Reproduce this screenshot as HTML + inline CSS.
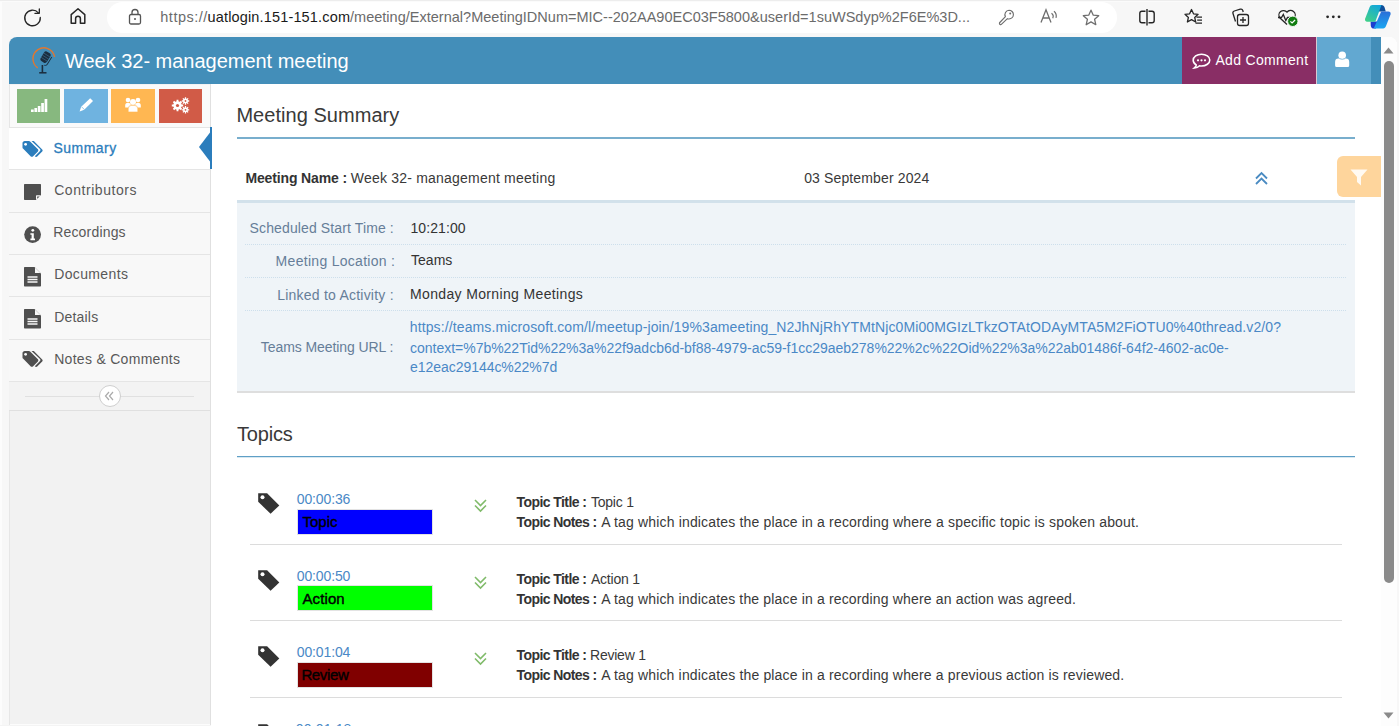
<!DOCTYPE html>
<html><head><meta charset="utf-8">
<style>
*{box-sizing:border-box;margin:0;padding:0}
html,body{width:1399px;height:726px;overflow:hidden;background:#f7f7f7;font-family:"Liberation Sans",sans-serif;}
.a{position:absolute;white-space:nowrap}
svg{position:absolute;overflow:visible}
#page{position:absolute;left:9px;top:37px;width:1388px;height:689px;background:#fff;border-radius:8px 8px 0 0;overflow:hidden}
#hdr{position:absolute;left:0;top:0;width:1372px;height:47px;background:#438eb9}
#sb{position:absolute;left:0;top:47px;width:202px;height:642px;background:#f2f2f2;border-right:1px solid #e0e0e0}
.nav{position:absolute;left:0;width:201px;height:42px;border-top:1px solid #e5e5e5;background:#f9f9f9}
.nav span{position:absolute;left:45px;top:12px;font-size:14px;color:#585858}
#scroll{position:absolute;left:1372px;top:0;width:16px;height:689px;background:#fafafa}

.nt{font-size:14px;color:#585858}
.h2{font-size:20px;color:#393939}
.t13{font-size:14px;color:#393939}
.t13 b{color:#333}
.lbl{font-size:14px;color:#667e99}
.val{font-size:14px;color:#333}
.lnk{color:#4a88c6}
.dot{width:1102px;height:1px;background-image:linear-gradient(to right,#cddfec 50%,transparent 50%);background-size:2px 1px}
.tm{font-size:14px;color:#4a88c6}
.lab{font-size:15px;color:#000}
</style></head><body>
<!-- browser toolbar -->
<div class="a" style="left:0;top:0;width:1399px;height:1px;background:#ededed"></div><div class="a" style="left:0;top:1px;width:1399px;height:1px;background:#fbfbfb"></div>
<!-- reload -->
<svg style="left:21.5px;top:6.5px" width="21" height="21" viewBox="0 0 20 20"><path d="M16.5 1.8V6H12.3" fill="none" stroke="#262626" stroke-width="1.25" stroke-linecap="round" stroke-linejoin="round"/><path d="M15.6 5.6A7.4 7.4 0 1 0 17.4 10" fill="none" stroke="#262626" stroke-width="1.25" stroke-linecap="round"/></svg>
<!-- home -->
<svg style="left:69px;top:7px" width="18" height="18" viewBox="0 0 18 18"><path d="M2.2 16.2V7.6L9 1.8l6.8 5.8v8.6h-4.4v-4.6a2.4 2.4 0 0 0-4.8 0v4.6z" fill="none" stroke="#262626" stroke-width="1.5" stroke-linejoin="round"/></svg>
<div class="a" style="left:107px;top:2px;width:1010px;height:31px;background:#fff;border-radius:16px"></div>
<!-- lock -->
<svg style="left:128px;top:8px" width="14" height="17" viewBox="0 0 14 17"><rect x="1.5" y="6.5" width="11" height="9.5" rx="1.5" fill="none" stroke="#555" stroke-width="1.3"/><path d="M4 6.5V4.5a3 3 0 0 1 6 0v2" fill="none" stroke="#555" stroke-width="1.3"/><circle cx="7" cy="11" r="1" fill="#555"/></svg>
<!-- key -->
<svg style="left:998px;top:9px" width="17" height="16" viewBox="0 0 17 16"><path d="M11 1.2a4.4 4.4 0 0 1 0 8.8c-.6 0-1.1-.1-1.6-.3L3.6 15.2a1.2 1.2 0 0 1-1.8-1.7L7.4 7.6A4.4 4.4 0 0 1 11 1.2z" fill="none" stroke="#6e6e6e" stroke-width="1.15" stroke-linejoin="round"/><circle cx="12.2" cy="4.6" r="1" fill="#6e6e6e"/></svg>
<!-- read aloud -->
<svg style="left:1040px;top:8px" width="18" height="16" viewBox="0 0 18 16"><path d="M1 14.5L6 1.8l5 12.7M2.8 10h6.4" fill="none" stroke="#6e6e6e" stroke-width="1.3"/><path d="M11.5 5.2a4 4 0 0 1 1.2 5M14 3.2a6.5 6.5 0 0 1 2 6.6" fill="none" stroke="#6e6e6e" stroke-width="1.2"/></svg>
<!-- star -->
<svg style="left:1082px;top:9px" width="18" height="17" viewBox="0 0 18 17"><path d="M9 1.2l2.3 5 5.4.5-4.1 3.6 1.2 5.4L9 12.9l-4.8 2.8 1.2-5.4L1.3 6.7l5.4-.5z" fill="none" stroke="#6e6e6e" stroke-width="1.3" stroke-linejoin="round"/></svg>
<!-- split -->
<svg style="left:1138px;top:8px" width="18" height="18" viewBox="0 0 18 18"><path d="M7.5 3.2H4a2.2 2.2 0 0 0-2.2 2.2v7.2A2.2 2.2 0 0 0 4 14.8h3.5M10.5 3.2H14a2.2 2.2 0 0 1 2.2 2.2v7.2a2.2 2.2 0 0 1-2.2 2.2h-3.5M9 1v16.5" fill="none" stroke="#262626" stroke-width="1.4"/></svg>
<!-- favorites -->
<svg style="left:1184px;top:8px" width="19" height="18" viewBox="0 0 19 18"><path d="M7.5 1.5l2 4.3 4.6.5-3.4 3.1 1 4.6-4.2-2.4-4.1 2.4 1-4.6L1 6.3l4.6-.5z" fill="none" stroke="#262626" stroke-width="1.3" stroke-linejoin="round"/><path d="M12.5 9.2h5.5M13.2 12.2h4.8M11.5 15.2h6.5" stroke="#262626" stroke-width="1.3"/></svg>
<!-- collections -->
<svg style="left:1231px;top:8px" width="19" height="18" viewBox="0 0 19 18"><path d="M4.5 13.5L2 5.5a2 2 0 0 1 1.3-2.5l6-1.8a2 2 0 0 1 2.5 1.3l.4 1.5" fill="none" stroke="#262626" stroke-width="1.3"/><rect x="6.5" y="6.5" width="11" height="11" rx="2.2" fill="#f7f7f7" stroke="#262626" stroke-width="1.3"/><path d="M12 9v6M9 12h6" stroke="#262626" stroke-width="1.3"/></svg>
<!-- health -->
<svg style="left:1277px;top:9px" width="22" height="18" viewBox="0 0 22 18"><path d="M10 15.5L3 9a4.5 4.5 0 0 1 7-5.8A4.5 4.5 0 0 1 17.2 9" fill="none" stroke="#262626" stroke-width="1.3"/><path d="M1 8.5h3.5l1.8-3 2.5 6 1.7-3H13" fill="none" stroke="#262626" stroke-width="1.3"/><circle cx="15.8" cy="12.3" r="5.2" fill="#107c10" stroke="#f7f7f7" stroke-width="1"/><path d="M13.4 12.4l1.7 1.6 3-3" fill="none" stroke="#fff" stroke-width="1.2"/></svg>
<!-- more -->
<svg style="left:1326px;top:15px" width="15" height="4" viewBox="0 0 15 4"><circle cx="1.6" cy="1.8" r="1.4" fill="#262626"/><circle cx="7.3" cy="1.8" r="1.4" fill="#262626"/><circle cx="13" cy="1.8" r="1.4" fill="#262626"/></svg>
<!-- copilot -->
<svg style="left:1360px;top:0px" width="39" height="35" viewBox="0 0 39 35">
<defs>
<linearGradient id="cg1" x1="0.8" y1="0" x2="0.2" y2="1"><stop offset="0" stop-color="#12a6dc"/><stop offset="1" stop-color="#3fd08a"/></linearGradient>
<linearGradient id="cg2" x1="0.5" y1="0" x2="0.5" y2="1"><stop offset="0" stop-color="#2b6fd8"/><stop offset="1" stop-color="#1aa6f2"/></linearGradient>
</defs>
<path d="M18 5h3.5c1.6 0 2.6 1 3.1 2.6l1.2 4H19z" fill="#0f4f9a"/>
<path d="M10.6 21.5h6.6l-1.2 7h-2.2c-1.6 0-2.6-1-3-2.6z" fill="#1a3fd0"/>
<path d="M12.5 5h9l-6.2 16.7H7.2c-1.7 0-2.6-1.3-2.1-2.9L9.6 7.3C10.2 5.8 11 5 12.5 5z" fill="url(#cg1)"/>
<path d="M21.2 11.6h7.2c1.7 0 2.6 1.3 2.1 2.9L26 26.1c-.6 1.5-1.4 2.3-2.9 2.3h-9.4z" fill="url(#cg2)"/>
</svg>


<!-- page frame -->
<div class="a" style="left:9px;top:37px;width:1388px;height:689px;background:#fff;border-radius:8px 8px 0 0"></div>
<!-- header -->
<div class="a" style="left:9px;top:37px;width:1372px;height:47px;background:#438eb9;border-radius:8px 0 0 0"></div>
<svg style="left:28px;top:42px" width="32" height="36" viewBox="0 0 32 36">
 <path d="M26.6 15A10.9 10.9 0 1 0 9.7 25.8" fill="none" stroke="#e2772f" stroke-width="1.4"/>
 <g transform="rotate(32 17 16)"><rect x="13.3" y="9.5" width="7.4" height="11" rx="2.6" fill="#1b2d3e"/><path d="M13.3 12.5h7.4M13.3 15h7.4M13.3 17.5h7.4" stroke="#3d6e8f" stroke-width="0.6"/><path d="M22.2 11.5v8.5q0 2-2 2.5" fill="none" stroke="#1b2d3e" stroke-width="0.9"/></g>
 <path d="M14.4 23v8" stroke="#1b2d3e" stroke-width="1.6"/><path d="M11.2 30.8h7.3" stroke="#1b2d3e" stroke-width="1.5"/>
</svg>
<div class="a" style="left:1182px;top:37px;width:134px;height:47px;background:#892e65"></div>
<svg style="left:1192px;top:53px" width="19" height="16" viewBox="0 0 19 16"><path d="M9.5 1.2C4.9 1.2 1.2 3.9 1.2 7.3c0 1.9 1.2 3.6 3 4.7-.2 1.2-.9 2.3-1.8 3 2.2-.1 4-1 5.2-2.2.6.1 1.2.2 1.9.2 4.6 0 8.3-2.7 8.3-6S14.1 1.2 9.5 1.2z" fill="none" stroke="#fff" stroke-width="1.6"/><circle cx="6" cy="7.3" r="1.1" fill="#fff"/><circle cx="9.5" cy="7.3" r="1.1" fill="#fff"/><circle cx="13" cy="7.3" r="1.1" fill="#fff"/></svg>
<div class="a" style="left:1316px;top:37px;width:1px;height:47px;background:#d9c8d2"></div>
<div class="a" style="left:1317px;top:37px;width:54px;height:47px;background:#62a8d1"></div>
<svg style="left:1335px;top:51px" width="15" height="17" viewBox="0 0 15 17"><circle cx="7.2" cy="4.3" r="3.8" fill="#fff"/><path d="M0.1 14.4V11a3.4 3.4 0 0 1 3.4-3.4h7.3a3.4 3.4 0 0 1 3.4 3.4v3.4a1.5 1.5 0 0 1-1.5 1.5H1.6a1.5 1.5 0 0 1-1.5-1.5z" fill="#fff"/><path d="M4.5 7.7q2.7 1.2 5.4 0" stroke="#62a8d1" stroke-width="0.7" fill="none"/></svg>
<!-- scrollbar -->
<div class="a" style="left:1381px;top:37px;width:16px;height:689px;background:#fdfdfd;border-radius:0 8px 0 0"></div>
<svg style="left:1383px;top:47px" width="11" height="7" viewBox="0 0 11 7"><path d="M0.5 6.5L5.5 0.5l5 6z" fill="#8a8a8a"/></svg>
<div class="a" style="left:1384px;top:61px;width:10px;height:522px;background:#8a8a8a;border-radius:5px"></div>
<svg style="left:1383px;top:712px" width="11" height="7" viewBox="0 0 11 7"><path d="M0.5 0.5h10L5.5 6.5z" fill="#8a8a8a"/></svg>

<!-- sidebar -->
<div class="a" style="left:0;top:2px;width:2px;height:724px;background:#fcfcfc"></div>

<div class="a" style="left:9px;top:84px;width:202px;height:642px;background:#f2f2f2;border-right:1px solid #e0e0e0"></div>
<div class="a" style="left:9px;top:85px;width:201px;height:42px;background:#fafafa"></div>
<div class="a" style="left:9px;top:84px;width:1px;height:642px;background:#e6e6e6"></div>
<div class="a" style="left:17px;top:89px;width:43px;height:34px;background:#87b87f"></div>
<div class="a" style="left:64px;top:89px;width:44px;height:34px;background:#6fb3e0"></div>
<div class="a" style="left:111px;top:89px;width:44px;height:34px;background:#ffb752"></div>
<div class="a" style="left:159px;top:89px;width:43px;height:34px;background:#d15b47"></div>
<svg style="left:30px;top:98px" width="18" height="15" viewBox="0 0 18 15"><path d="M1 11.5h2.7V14H1zM4.4 10h2.7v4H4.4zM7.8 8h2.7v6H7.8zM11.2 5h2.7v9h-2.7zM14.6 1h2.7v13h-2.7z" fill="#fff"/></svg>
<svg style="left:78px;top:97px" width="16" height="16" viewBox="0 0 16 16"><path d="M12.2 1.2l2.8 2.8-8.8 8.8-4.6 1.6 1.6-4.6z" fill="#fff"/><path d="M3.6 9.8l2.8 2.8" stroke="#6fb3e0" stroke-width="0.7"/></svg>
<svg style="left:124px;top:96px" width="18" height="17" viewBox="0 0 18 17"><circle cx="4" cy="4" r="2.3" fill="#fff"/><circle cx="14" cy="4" r="2.3" fill="#fff"/><circle cx="9" cy="6" r="3" fill="#fff"/><path d="M1.2 9.5a2.8 2.8 0 0 1 5.6 0v2H1.2zM11.2 9.5a2.8 2.8 0 0 1 5.6 0v2h-5.6z" fill="#fff"/><path d="M4.2 16v-3.2a3.5 3.5 0 0 1 3.5-3.5h2.6a3.5 3.5 0 0 1 3.5 3.5V16z" fill="#fff" stroke="#ffb752" stroke-width="0.6"/></svg>
<svg style="left:171px;top:97px" width="20" height="17" viewBox="0 0 20 17"><g fill="#fff"><circle cx="6.5" cy="8.5" r="4.2"/><circle cx="14.5" cy="4" r="2.4"/><circle cx="14.5" cy="12.8" r="2.4"/></g><g stroke="#fff" stroke-width="1.9"><path d="M6.5 2.8v11.4M0.8 8.5h11.4M2.5 4.5l8 8M10.5 4.5l-8 8"/></g><g stroke="#fff" stroke-width="1.3"><path d="M14.5 0.3v7.4M10.8 4h7.4M11.9 1.4l5.2 5.2M17.1 1.4l-5.2 5.2M14.5 9.1v7.4M10.8 12.8h7.4M11.9 10.2l5.2 5.2M17.1 10.2l-5.2 5.2"/></g><circle cx="6.5" cy="8.5" r="1.6" fill="#d15b47"/><circle cx="14.5" cy="4" r="0.9" fill="#d15b47"/><circle cx="14.5" cy="12.8" r="0.9" fill="#d15b47"/></svg>

<div class="a" style="left:9px;top:127px;width:201px;height:1px;background:#e5e5e5"></div>
<div class="a" style="left:9px;top:128px;width:201px;height:41px;background:#fff"></div>
<div class="a" style="left:9px;top:169px;width:201px;height:212px;background:#f8f8f8"></div>
<div class="a" style="left:9px;top:169px;width:201px;height:1px;background:#e5e5e5"></div>
<div class="a" style="left:9px;top:212px;width:201px;height:1px;background:#e5e5e5"></div>
<div class="a" style="left:9px;top:254px;width:201px;height:1px;background:#e5e5e5"></div>
<div class="a" style="left:9px;top:296px;width:201px;height:1px;background:#e5e5e5"></div>
<div class="a" style="left:9px;top:339px;width:201px;height:1px;background:#e5e5e5"></div>
<div class="a" style="left:9px;top:381px;width:201px;height:1px;background:#e5e5e5"></div>
<div class="a" style="left:9px;top:382px;width:201px;height:28px;background:#f3f3f3"></div>
<div class="a" style="left:9px;top:410px;width:201px;height:1px;background:#e0e0e0"></div>
<div class="a" style="left:25px;top:396px;width:169px;height:1px;background:#e0e0e0"></div>
<div class="a" style="left:99px;top:385px;width:22px;height:22px;border-radius:11px;background:#fff;border:1px solid #cfcfcf"></div>
<svg style="left:104px;top:391px" width="11" height="10" viewBox="0 0 11 10"><path d="M5 1L1.5 5 5 9M9 1L5.5 5 9 9" fill="none" stroke="#aaa" stroke-width="1.2"/></svg>
<!-- active arrow -->
<div class="a" style="left:210px;top:127px;width:2px;height:42px;background:#2b7dbc"></div>
<svg style="left:199px;top:132px" width="12" height="30" viewBox="0 0 12 30"><path d="M11 0.5v29L0 15z" fill="#2b7dbc"/></svg>

<!-- nav icons -->
<svg style="left:22px;top:141px" width="22" height="17" viewBox="0 0 22 17"><path d="M0.5 2.2v4.2c0 .5.2.9.5 1.2l7.8 7.8c.6.6 1.5.6 2.1 0l5-5c.6-.6.6-1.5 0-2.1L8.1 .5C7.8.2 7.4 0 6.9 0H2.7C1.5 0 .5 1 .5 2.2z" fill="#2b7dbc"/><circle cx="3.6" cy="3.3" r="1.4" fill="#fff"/><path d="M9.5 0h2.3l8.4 8.4c.6.6.6 1.5 0 2.1l-5 5c-.6.6-1.5.6-2.1 0l-.3-.3 5.2-5.2c.6-.6.6-1.5 0-2.1z" fill="#2b7dbc"/></svg>
<svg style="left:24px;top:184px" width="17" height="16" viewBox="0 0 17 16"><path d="M1 0h15c.6 0 1 .4 1 1v10l-5 5H1c-.6 0-1-.4-1-1V1c0-.6.4-1 1-1z" fill="#4f4f4f"/><path d="M12.5 15.5v-4h4" fill="#f8f8f8"/><path d="M12 16v-4.5h4.5z" fill="#f8f8f8"/><path d="M13.2 14.8v-2.3h2.3z" fill="#4f4f4f"/></svg>
<svg style="left:24px;top:226px" width="18" height="18" viewBox="0 0 18 18"><circle cx="8.6" cy="8.6" r="8.4" fill="#4f4f4f"/><circle cx="8.8" cy="4.3" r="1.4" fill="#fff"/><path d="M6.4 7.2h3.4v5.4h1.2v1.6H6.4v-1.6h1.2V8.8H6.4z" fill="#fff"/></svg>
<svg style="left:24px;top:267px" width="18" height="20" viewBox="0 0 18 20"><path d="M1 0h9.5L17 6.5V18.5c0 .6-.4 1-1 1H1c-.6 0-1-.4-1-1V1c0-.6.4-1 1-1z" fill="#4f4f4f"/><path d="M11 0.5v5.5h5.5z" fill="#f8f8f8"/><path d="M3.5 10h10M3.5 12.5h10M3.5 15h10" stroke="#f8f8f8" stroke-width="1.3"/></svg>
<svg style="left:24px;top:309px" width="18" height="20" viewBox="0 0 18 20"><path d="M1 0h9.5L17 6.5V18.5c0 .6-.4 1-1 1H1c-.6 0-1-.4-1-1V1c0-.6.4-1 1-1z" fill="#4f4f4f"/><path d="M11 0.5v5.5h5.5z" fill="#f8f8f8"/><path d="M3.5 10h10M3.5 12.5h10M3.5 15h10" stroke="#f8f8f8" stroke-width="1.3"/></svg>
<svg style="left:22px;top:351px" width="22" height="17" viewBox="0 0 22 17"><path d="M0.5 2.2v4.2c0 .5.2.9.5 1.2l7.8 7.8c.6.6 1.5.6 2.1 0l5-5c.6-.6.6-1.5 0-2.1L8.1 .5C7.8.2 7.4 0 6.9 0H2.7C1.5 0 .5 1 .5 2.2z" fill="#4f4f4f"/><circle cx="3.6" cy="3.3" r="1.4" fill="#f8f8f8"/><path d="M9.5 0h2.3l8.4 8.4c.6.6.6 1.5 0 2.1l-5 5c-.6.6-1.5.6-2.1 0l-.3-.3 5.2-5.2c.6-.6.6-1.5 0-2.1z" fill="#4f4f4f"/></svg>


<!-- main content -->
<div class="a" style="left:237px;top:137px;width:1118px;height:2px;background:#78aecd"></div>

<svg style="left:1255px;top:172px" width="13" height="13" viewBox="0 0 13 13"><path d="M1 6.5L6.5 1 12 6.5M1 12L6.5 6.5 12 12" fill="none" stroke="#4a8bc2" stroke-width="1.8"/></svg>
<div class="a" style="left:1337px;top:156px;width:44px;height:41px;background:#fed59c;border-radius:6px 0 0 6px"></div>
<svg style="left:1350px;top:169px" width="18" height="17" viewBox="0 0 18 17"><path d="M0.5 0.5h17L11 8v8.5L7 13V8z" fill="#fffaf2"/></svg>

<div class="a" style="left:237px;top:200px;width:1118px;height:3px;background:#d2e1eb"></div>
<div class="a" style="left:237px;top:203px;width:1118px;height:188px;background:#eff4f8"></div>
<div class="a" style="left:237px;top:391px;width:1118px;height:2px;background:#dedede"></div>
<div class="a dot" style="left:245px;top:244px"></div>
<div class="a dot" style="left:245px;top:277px"></div>
<div class="a dot" style="left:245px;top:310px"></div>


<div class="a" style="left:237px;top:456px;width:1118px;height:1px;background:#5f9fc6"></div><div class="a" style="left:237px;top:457px;width:1118px;height:1px;background:#d8e8f0"></div>

<svg style="left:258px;top:493px" width="22" height="22" viewBox="0 0 22 22"><path d="M0.2 0.2H9.1L21.3 12.4L12.6 20.8L0.2 8.8Z" fill="#333"/><circle cx="4.5" cy="4.3" r="2" fill="#fff"/></svg>
<div class="a" style="left:297px;top:509px;width:136px;height:26px;background:#0000ff;border:1px solid #e3e3e3"></div>
<svg style="left:474px;top:499px" width="13" height="13" viewBox="0 0 13 13"><path d="M1 1L6.5 6.5 12 1M1 6.5L6.5 12 12 6.5" fill="none" stroke="#80bb6a" stroke-width="1.6"/></svg>
<div class="a" style="left:250px;top:544px;width:1092px;height:1px;background:#dcdcdc"></div>
<svg style="left:258px;top:570px" width="22" height="22" viewBox="0 0 22 22"><path d="M0.2 0.2H9.1L21.3 12.4L12.6 20.8L0.2 8.8Z" fill="#333"/><circle cx="4.5" cy="4.3" r="2" fill="#fff"/></svg>
<div class="a" style="left:297px;top:585px;width:136px;height:26px;background:#00ff00;border:1px solid #e3e3e3"></div>
<svg style="left:474px;top:576px" width="13" height="13" viewBox="0 0 13 13"><path d="M1 1L6.5 6.5 12 1M1 6.5L6.5 12 12 6.5" fill="none" stroke="#80bb6a" stroke-width="1.6"/></svg>
<div class="a" style="left:250px;top:620px;width:1092px;height:1px;background:#dcdcdc"></div>
<svg style="left:258px;top:646px" width="22" height="22" viewBox="0 0 22 22"><path d="M0.2 0.2H9.1L21.3 12.4L12.6 20.8L0.2 8.8Z" fill="#333"/><circle cx="4.5" cy="4.3" r="2" fill="#fff"/></svg>
<div class="a" style="left:297px;top:662px;width:136px;height:26px;background:#800000;border:1px solid #e3e3e3"></div>
<svg style="left:474px;top:652px" width="13" height="13" viewBox="0 0 13 13"><path d="M1 1L6.5 6.5 12 1M1 6.5L6.5 12 12 6.5" fill="none" stroke="#80bb6a" stroke-width="1.6"/></svg>
<div class="a" style="left:250px;top:697px;width:1092px;height:1px;background:#dcdcdc"></div>
<svg style="left:258px;top:723.5px" width="22" height="22" viewBox="0 0 22 22"><path d="M0.2 0.2H9.1L21.3 12.4L12.6 20.8L0.2 8.8Z" fill="#333"/><circle cx="4.5" cy="4.3" r="2" fill="#fff"/></svg>
<div class="a" style="left:297px;top:739px;width:136px;height:26px;background:#ffff00;border:1px solid #e3e3e3"></div>
<svg style="left:474px;top:729.5px" width="13" height="13" viewBox="0 0 13 13"><path d="M1 1L6.5 6.5 12 1M1 6.5L6.5 12 12 6.5" fill="none" stroke="#80bb6a" stroke-width="1.6"/></svg>
<div class="a" style="left:250px;top:774px;width:1092px;height:1px;background:#dcdcdc"></div>
<div class="a" style="left:10px;top:724px;width:200px;height:1px;background:#fcfcfc"></div>
<div class="a" style="left:0;top:725px;width:211px;height:1px;background:#f4f4f4"></div>
<div class="a tx" id="url1" style="left:160.30px;top:8.88px;font-size:14.5px;color:#6b6b6b;letter-spacing:0.500px;">https://</div>
<div class="a tx" id="url2" style="left:207.50px;top:8.88px;font-size:14.5px;color:#1a1a1a;letter-spacing:0.158px;">uatlogin.151-151.com</div>
<div class="a tx" id="url3" style="left:350.00px;top:8.88px;font-size:14.5px;color:#6b6b6b;letter-spacing:0.013px;">/meeting/External?MeetingIDNum=MIC--202AA90EC03F5800&amp;userId=1suWSdyp%2F6E%3D...</div>
<div class="a tx" id="title" style="left:65.00px;top:49.80px;font-size:20px;color:#fff;letter-spacing:-0.019px;">Week 32- management meeting</div>
<div class="a tx" id="addc" style="left:1215.40px;top:52.31px;font-size:14px;color:#fff;letter-spacing:0.320px;">Add Comment</div>
<div class="a tx" id="nav1" style="left:53.40px;top:140.00px;font-size:14px;color:#2b7dbc;letter-spacing:0.483px;-webkit-text-stroke:0.3px #2b7dbc;">Summary</div>
<div class="a tx" id="nav2" style="left:54.20px;top:181.71px;font-size:14px;color:#585858;letter-spacing:0.545px;">Contributors</div>
<div class="a tx" id="nav3" style="left:53.20px;top:223.71px;font-size:14px;color:#585858;letter-spacing:0.178px;">Recordings</div>
<div class="a tx" id="nav4" style="left:54.20px;top:266.41px;font-size:14px;color:#585858;letter-spacing:0.362px;">Documents</div>
<div class="a tx" id="nav5" style="left:54.20px;top:308.81px;font-size:14px;color:#585858;letter-spacing:0.200px;">Details</div>
<div class="a tx" id="nav6" style="left:54.20px;top:350.81px;font-size:14px;color:#585858;letter-spacing:0.293px;">Notes &amp; Comments</div>
<div class="a tx" id="hms" style="left:236.40px;top:104.41px;font-size:20px;color:#393939;letter-spacing:0.043px;">Meeting Summary</div>
<div class="a tx" id="mnl" style="left:245.40px;top:169.90px;font-size:14px;color:#333;letter-spacing:-0.138px;font-weight:bold;">Meeting Name :</div>
<div class="a tx" id="mnv" style="left:350.80px;top:169.90px;font-size:14px;color:#393939;letter-spacing:0.208px;">Week 32- management meeting</div>
<div class="a tx" id="date" style="left:804.20px;top:169.90px;font-size:14px;color:#393939;letter-spacing:0.131px;">03 September 2024</div>
<div class="a tx" id="l1" style="left:249.60px;top:219.60px;font-size:14px;color:#667e99;letter-spacing:0.119px;">Scheduled Start Time :</div>
<div class="a tx" id="l2" style="left:275.60px;top:252.71px;font-size:14px;color:#667e99;letter-spacing:0.294px;">Meeting Location :</div>
<div class="a tx" id="l3" style="left:277.20px;top:286.50px;font-size:14px;color:#667e99;letter-spacing:0.226px;">Linked to Activity :</div>
<div class="a tx" id="l4" style="left:260.80px;top:339.41px;font-size:14px;color:#667e99;letter-spacing:-0.078px;">Teams Meeting URL :</div>
<div class="a tx" id="v1" style="left:410.40px;top:219.90px;font-size:14px;color:#333;letter-spacing:0.100px;">10:21:00</div>
<div class="a tx" id="v2" style="left:411.00px;top:252.41px;font-size:14px;color:#333;letter-spacing:0.025px;">Teams</div>
<div class="a tx" id="v3" style="left:410.00px;top:286.31px;font-size:14px;color:#333;letter-spacing:0.355px;">Monday Morning Meetings</div>
<div class="a tx" id="k1" style="left:409.80px;top:319.00px;font-size:14px;color:#4a88c6;letter-spacing:0.114px;">https://teams.microsoft.com/l/meetup-join/19%3ameeting_N2JhNjRhYTMtNjc0Mi00MGIzLTkzOTAtODAyMTA5M2FiOTU0%40thread.v2/0?</div>
<div class="a tx" id="k2" style="left:410.00px;top:339.50px;font-size:14px;color:#4a88c6;letter-spacing:-0.015px;">context=%7b%22Tid%22%3a%22f9adcb6d-bf88-4979-ac59-f1cc29aeb278%22%2c%22Oid%22%3a%22ab01486f-64f2-4602-ac0e-</div>
<div class="a tx" id="k3" style="left:410.00px;top:359.21px;font-size:14px;color:#4a88c6;letter-spacing:-0.041px;">e12eac29144c%22%7d</div>
<div class="a tx" id="htp" style="left:237.00px;top:423.22px;font-size:20px;color:#393939;letter-spacing:-0.200px;">Topics</div>
<div class="a tx" id="tm0" style="left:296.80px;top:490.61px;font-size:14px;color:#4a88c6;letter-spacing:-0.129px;">00:00:36</div>
<div class="a tx" id="lab0" style="left:302.50px;top:512.90px;font-size:15px;color:#000;letter-spacing:0.000px;-webkit-text-stroke:0.4px #000;">Topic</div>
<div class="a tx" id="ttl0" style="left:516.60px;top:493.81px;font-size:14px;color:#333;letter-spacing:-0.583px;font-weight:bold;">Topic Title :</div>
<div class="a tx" id="ttv0" style="left:591.00px;top:493.81px;font-size:14px;color:#393939;letter-spacing:-0.233px;">Topic 1</div>
<div class="a tx" id="tnl0" style="left:516.60px;top:513.81px;font-size:14px;color:#333;letter-spacing:-0.583px;font-weight:bold;">Topic Notes :</div>
<div class="a tx" id="tnv0" style="left:601.20px;top:513.81px;font-size:14px;color:#393939;letter-spacing:0.165px;">A tag which indicates the place in a recording where a specific topic is spoken about.</div>
<div class="a tx" id="tm1" style="left:296.80px;top:567.61px;font-size:14px;color:#4a88c6;letter-spacing:-0.129px;">00:00:50</div>
<div class="a tx" id="lab1" style="left:302.40px;top:589.90px;font-size:15px;color:#000;letter-spacing:0.120px;-webkit-text-stroke:0.4px #000;">Action</div>
<div class="a tx" id="ttl1" style="left:516.60px;top:570.81px;font-size:14px;color:#333;letter-spacing:-0.583px;font-weight:bold;">Topic Title :</div>
<div class="a tx" id="ttv1" style="left:591.00px;top:570.81px;font-size:14px;color:#393939;letter-spacing:-0.233px;">Action 1</div>
<div class="a tx" id="tnl1" style="left:516.60px;top:590.81px;font-size:14px;color:#333;letter-spacing:-0.583px;font-weight:bold;">Topic Notes :</div>
<div class="a tx" id="tnv1" style="left:601.20px;top:590.81px;font-size:14px;color:#393939;letter-spacing:0.160px;">A tag which indicates the place in a recording where an action was agreed.</div>
<div class="a tx" id="tm2" style="left:296.80px;top:643.61px;font-size:14px;color:#4a88c6;letter-spacing:-0.129px;">00:01:04</div>
<div class="a tx" id="lab2" style="left:301.40px;top:665.90px;font-size:15px;color:#000;letter-spacing:-0.360px;-webkit-text-stroke:0.4px #000;">Review</div>
<div class="a tx" id="ttl2" style="left:516.60px;top:646.81px;font-size:14px;color:#333;letter-spacing:-0.583px;font-weight:bold;">Topic Title :</div>
<div class="a tx" id="ttv2" style="left:590.00px;top:646.81px;font-size:14px;color:#393939;letter-spacing:-0.233px;">Review 1</div>
<div class="a tx" id="tnl2" style="left:516.60px;top:666.81px;font-size:14px;color:#333;letter-spacing:-0.583px;font-weight:bold;">Topic Notes :</div>
<div class="a tx" id="tnv2" style="left:601.20px;top:666.81px;font-size:14px;color:#393939;letter-spacing:0.162px;">A tag which indicates the place in a recording where a previous action is reviewed.</div>
<div class="a tx" id="tm3" style="left:295.80px;top:721.11px;font-size:14px;color:#4a88c6;letter-spacing:0.157px;">00:01:18</div>
<div class="a tx" id="lab3" style="left:302.10px;top:743.82px;font-size:15px;color:#000;letter-spacing:0.000px;-webkit-text-stroke:0.4px #000;">Review</div>
<div class="a tx" id="ttl3" style="left:516.40px;top:724.63px;font-size:14px;color:#333;letter-spacing:0.000px;font-weight:bold;">Topic Title :</div>
<div class="a tx" id="ttv3" style="left:591.00px;top:724.63px;font-size:14px;color:#393939;letter-spacing:-0.233px;">Review 2</div>
</body></html>
